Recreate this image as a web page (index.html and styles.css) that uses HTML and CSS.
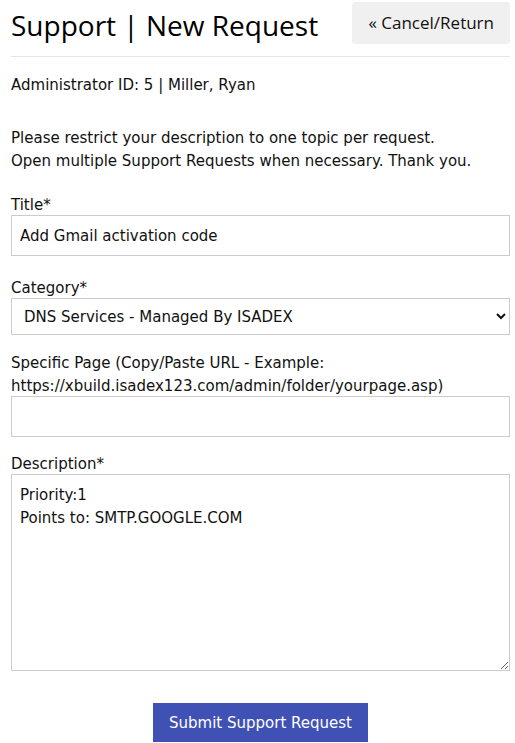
FILE: index.html
```html
<!DOCTYPE html>
<html lang="en">
<head>
    <meta charset="UTF-8">
    <meta name="viewport" content="width=device-width, initial-scale=1.0">
    <title>Support | New Request</title>
    <link rel="stylesheet" href="styles.css">
</head>
<body>
    <div class="container">
        <div class="header">
            <h1 class="page-title">Support | New Request</h1>
            <a class="btn-cancel" href="#">&laquo; Cancel/Return</a>
        </div>

        <p class="admin-info">Administrator ID: 5 | Miller, Ryan</p>

        <p class="notice">
            Please restrict your description to one topic per request.<br>
            Open multiple Support Requests when necessary. Thank you.
        </p>

        <form class="request-form" onsubmit="return false;">
            <div class="field field-title">
                <label for="title">Title*</label>
                <input type="text" id="title" name="title" value="Add Gmail activation code">
            </div>

            <div class="field">
                <label for="category">Category*</label>
                <select id="category" name="category">
                    <option>DNS Services - Managed By ISADEX</option>
                </select>
            </div>

            <div class="field field-url">
                <label for="page-url">Specific Page (Copy/Paste URL - Example: https://xbuild.isadex123.com/admin/folder/yourpage.asp)</label>
                <input type="text" id="page-url" name="page-url">
            </div>

            <div class="field">
                <label for="description">Description*</label>
                <textarea id="description" name="description">Priority:1
Points to: SMTP.GOOGLE.COM</textarea>
            </div>

            <div class="actions">
                <button type="submit" class="btn-submit">Submit Support Request</button>
            </div>
        </form>
    </div>
</body>
</html>
```

FILE: styles.css
```css
body {
    margin: 0;
    padding: 0;
    font-family: "DejaVu Sans", Verdana, sans-serif;
    font-size: 15px;
    color: #111;
    background-color: #fff;
}

.container {
    padding: 0 5px 0 11px;
}

.header {
    display: flex;
    justify-content: space-between;
    align-items: flex-start;
    padding-top: 2px;
    padding-bottom: 12px;
    border-bottom: 1px solid #e6e6e6;
}

.page-title {
    margin: 5px 0 0;
    font-family: "Open Sans", "Noto Sans", sans-serif;
    font-size: 28px;
    font-weight: normal;
    line-height: 36px;
    color: #000;
}

.btn-cancel {
    display: block;
    padding: 0 16px;
    height: 42px;
    line-height: 42px;
    background-color: #f0f0f0;
    border-radius: 3px;
    font-family: "Open Sans", "Noto Sans", sans-serif;
    font-size: 17px;
    color: #111;
    text-decoration: none;
}

.admin-info {
    margin: 17px 0 0;
    line-height: 23px;
}

.notice {
    margin: 30px 0 0;
    line-height: 23px;
}

.request-form {
    margin-top: 19px;
}

.field {
    margin-bottom: 15px;
}

.field-title {
    margin-bottom: 19px;
}

.field-url {
    margin-bottom: 14px;
}

/* labels sit 2px lower in their row, the input stays put */
.field label {
    display: block;
    padding-top: 2px;
    margin-bottom: -2px;
    line-height: 23px;
}

.field input,
.field select,
.field textarea {
    display: block;
    width: 100%;
    box-sizing: border-box;
    border: 1px solid #ccc;
    border-radius: 0;
    background-color: #fff;
    font-family: inherit;
    font-size: 15px;
    color: #111;
}

.field input {
    height: 41px;
    padding: 0 8px;
}

.field select {
    height: 37px;
    padding: 0 8px;
}

.field textarea {
    height: 197px;
    padding: 9px 8px;
    line-height: 23px;
    resize: vertical;
}

.actions {
    display: flex;
    justify-content: center;
    margin-top: 32px;
}

.btn-submit {
    padding: 0 16px;
    height: 39px;
    background-color: #3f51b5;
    color: #fff;
    border: none;
    border-radius: 0;
    font-family: inherit;
    font-size: 15px;
    cursor: pointer;
}
```
